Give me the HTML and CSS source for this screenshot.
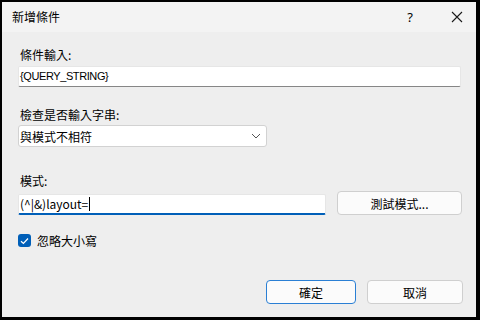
FILE: index.html
```html
<!DOCTYPE html>
<html lang="zh-Hant">
<head>
<meta charset="utf-8">
<link rel="stylesheet" href="styles.css">
</head>
<body>
<div class="window">
  <div class="titlebar">
    <span class="title">新增條件</span>
    <span class="help">?</span>
    <span class="close">
      <svg width="12" height="12" viewBox="0 0 12 12"><path d="M1 1L11 11M11 1L1 11" stroke="#1a1a1a" stroke-width="1.1" fill="none"/></svg>
    </span>
  </div>
  <div class="content">
    <div class="label l1">條件輸入:</div>
    <div class="field wide"><span class="caps">{QUERY_STRING}</span></div>
    <div class="label l2">檢查是否輸入字串:</div>
    <div class="select">
      <span>與模式不相符</span>
      <svg width="10" height="6" viewBox="0 0 10 6"><path d="M1 1L5 5L9 1" stroke="#555" stroke-width="1" fill="none"/></svg>
    </div>
    <div class="label l3">模式:</div>
    <div class="pattern-row">
      <div class="field focused">(^|&amp;)layout=<span class="caret"></span></div>
      <div class="btn test">測試模式...</div>
    </div>
    <div class="check-row">
      <span class="checkbox"><svg width="9" height="8" viewBox="0 0 9 8"><path d="M1 4.2L3.4 6.5L8 1.5" stroke="#fff" stroke-width="1.2" fill="none"/></svg></span>
      <span class="check-label">忽略大小寫</span>
    </div>
    <div class="footer">
      <div class="btn ok">確定</div>
      <div class="btn cancel">取消</div>
    </div>
  </div>
</div>
</body>
</html>
```

FILE: styles.css
```css
html, body {
  margin: 0;
  padding: 0;
}
body {
  width: 480px;
  height: 320px;
  overflow: hidden;
  font-family: "Noto Sans CJK TC", sans-serif;
  font-size: 12px;
  color: #000;
}
.window {
  box-sizing: border-box;
  width: 480px;
  height: 320px;
  border-style: solid;
  border-color: #000;
  border-width: 2px 4px 3px 2px;
  background: #eeeeee;
  display: flex;
  flex-direction: column;
}
.titlebar {
  height: 30px;
  flex: none;
  background: #f3f3f3;
  display: flex;
  align-items: center;
  padding-left: 10px;
}
.title {
  font-size: 12px;
  line-height: 16px;
  flex: 1;
}
.help {
  font-family: "Noto Sans", sans-serif;
  font-size: 13px;
  width: 46px;
  text-align: center;
  margin-right: 1px;
}
.close {
  width: 46px;
  display: flex;
  justify-content: center;
  margin-right: -4px;
}
.content {
  flex: 1;
  display: flex;
  flex-direction: column;
  padding: 15px 13px 0 16px;
}
.label {
  line-height: 16px;
  padding-left: 2px;
}
.l1 { margin-top: 0; }
.l2 { margin-top: 20px; }
.l3 { margin-top: 26px; }
.field {
  box-sizing: border-box;
  height: 21px;
  background: #fff;
  border: 1px solid #e6e6e6;
  border-bottom-color: #868686;
  border-radius: 2px;
  padding: 0 0 0 1px;
  line-height: 19px;
  display: flex;
  align-items: center;
}
.caps {
  font-family: "Liberation Sans", sans-serif;
  font-size: 11px;
  letter-spacing: -0.4px;
}
.wide {
  width: 443px;
  margin-top: 3px;
}
.select {
  box-sizing: border-box;
  margin-top: 2px;
  width: 249px;
  height: 22px;
  background: #fff;
  border: 1px solid #d2d2d2;
  border-radius: 3px;
  display: flex;
  align-items: center;
  justify-content: space-between;
  padding: 0 5px 0 1px;
}
.pattern-row {
  margin-top: 2px;
  display: flex;
  align-items: center;
  height: 24px;
}
.focused {
  width: 308px;
  border-bottom: 2px solid #005fb8;
  margin-top: 2px;
}
.caret {
  display: inline-block;
  width: 1px;
  height: 14px;
  background: #000;
  margin-left: 1px;
}
.btn {
  box-sizing: border-box;
  height: 24px;
  background: #fbfbfb;
  border: 1px solid #cfcfcf;
  border-radius: 4px;
  display: flex;
  align-items: center;
  justify-content: center;
}
.test {
  width: 125px;
  margin-left: 11px;
}
.check-row {
  margin-top: 19px;
  display: flex;
  align-items: center;
  height: 13px;
}
.checkbox {
  box-sizing: border-box;
  width: 13px;
  height: 13px;
  background: #005fb8;
  border-radius: 3px;
  display: flex;
  align-items: center;
  justify-content: center;
}
.check-label {
  margin-left: 6px;
}
.footer {
  margin-top: 33px;
  display: flex;
  justify-content: flex-end;
  gap: 11px;
}
.ok {
  width: 90px;
  border-color: #2a7fd4;
}
.cancel {
  width: 96px;
}
```
